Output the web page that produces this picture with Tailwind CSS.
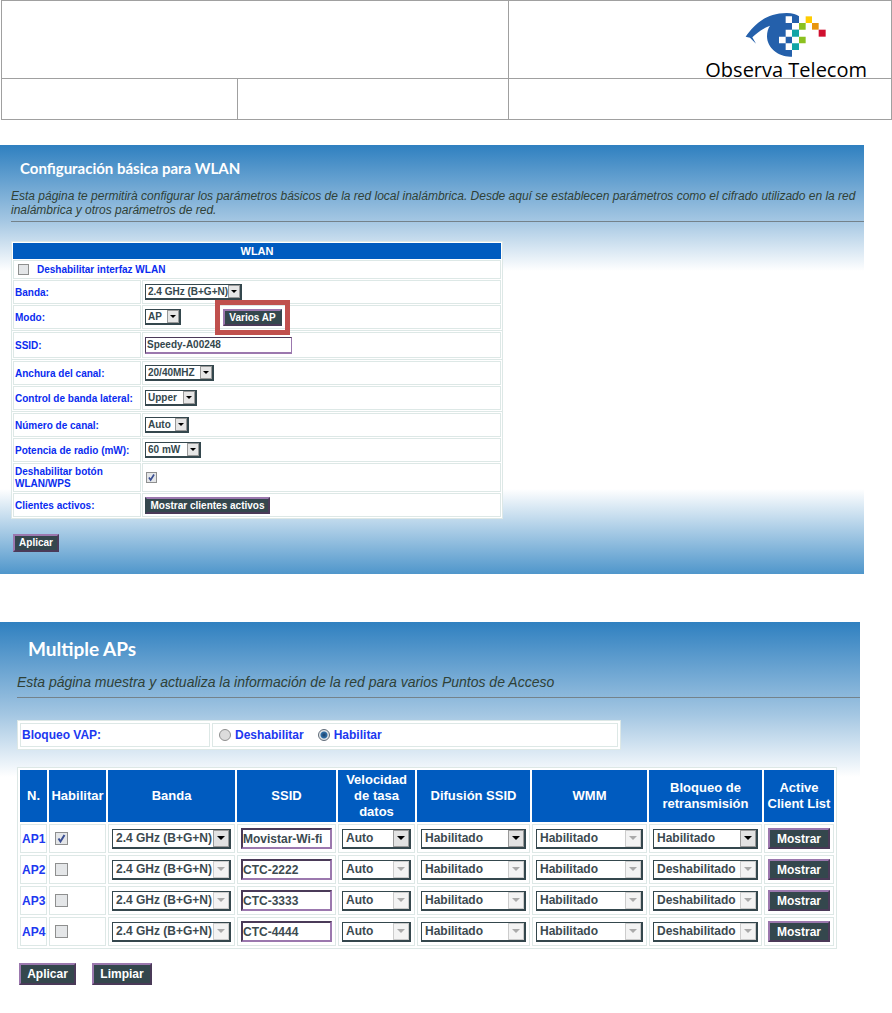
<!DOCTYPE html>
<html lang="es">
<head>
    <meta charset="UTF-8">
    <meta name="viewport" content="width=device-width, initial-scale=1.0">
    <title>Observa Telecom - Configuración WLAN</title>
    <script src="https://cdn.jsdelivr.net/npm/@tailwindcss/browser@4"></script>
</head>

<body class="bg-white font-['Liberation_Sans',Arial,sans-serif]">
    <!-- Cabecera -->
    <header class="ml-px border border-[#a0a0a0]">
        <div class="flex h-[77px]">
            <div class="w-[57%] border-r border-[#a0a0a0]"></div>
            <div class="flex flex-1 flex-col items-end pr-6 pt-[10px]">
                <svg class="mr-10 h-[47px] w-[82px] shrink-0" viewBox="165 30 246 141" role="img" aria-label="Observa Telecom">
                    <path fill="#2460ab" d="M167 107C190 76 222 37 290 36C308 36 320 40 327 46V86H306V167C268 170 231 142 231 106C231 93 234 82 240 74C218 82 201 96 187 109L198 128L180 110Z"/>
                    <path fill="#fff" d="M287 46h19v20h-19zM287 86h19v21h-19zM267 107h20v20h-20zM287 127h19v20h-19zM306 66h21v20h-21z"/>
                    <path fill="#2460ab" d="M306 46h21v20h-21z"/>
                    <path fill="#12a5a5" d="M306 86h21v21h-21zM306 127h21v20h-21z"/>
                    <path fill="#8cc11f" d="M327 66h20v20h-20zM327 107h20v20h-20z"/>
                    <path fill="#fc0" d="M347 46h19v20h-19z"/>
                    <path fill="#e8950c" d="M366 66h20v20h-20z"/>
                    <path fill="#d0102f" d="M386 86h21v21h-21z"/>
                </svg>
                <span class="shrink-0 font-['Open_Sans',sans-serif] text-xl leading-6 text-black">Observa Telecom</span>
            </div>
        </div>
        <div class="flex h-[41px] border-t border-[#a0a0a0]">
            <div class="w-[26.5%] border-r border-[#a0a0a0]"></div>
            <div class="w-[30.5%] border-r border-[#a0a0a0]"></div>
            <div class="flex-1"></div>
        </div>
    </header>

    <main>
        <!-- Configuración básica -->
        <section class="mr-7 mt-[25px] bg-[linear-gradient(to_bottom,#2f80c0_0px,#a3c6e2_75px,#fff_126px,#fff_344px,#4f96cb_429px)] pb-[22px] pl-[11px] text-[10px] font-bold text-[#0a2cf0]">
            <h1 class="pl-[9px] pt-[11px] font-['Lato',sans-serif] text-[15px] leading-6 text-white">Configuración básica para WLAN</h1>
            <p class="mt-[9px] text-xs font-normal italic leading-[14px] text-[#2f4137]">Esta página te permitirà configurar los parámetros básicos de la red local inalámbrica. Desde aquí se establecen parámetros como el cifrado utilizado en la red inalámbrica y otros parámetros de red.</p>
            <hr class="mt-1 border-[#74828a]">

            <form>
                <div class="mt-[19px] w-[492px] border border-b-0 border-[#dde8e6] bg-white">
                    <div class="flex flex-col gap-px border-b border-[#dde8e6] p-px">
                        <h2 class="h-4 bg-[#005bbf] text-center text-[11px] leading-4 text-white">WLAN</h2>
                        <div class="flex h-[19px] items-center gap-2 border border-[#dde8e6] pl-1">
                            <input id="disableWlan" type="checkbox" class="size-[11px] appearance-none border border-[#8e8f8f] bg-[#e4e6e8]">
                            <label for="disableWlan">Deshabilitar interfaz WLAN</label>
                        </div>
                        <div class="grid h-6 grid-cols-[128px_1fr] gap-px">
                            <label for="band" class="flex items-center border border-[#dde8e6] pl-px">Banda:</label>
                            <div class="flex items-center border border-[#dde8e6] pl-[2px]">
                                <div class="relative w-[97px]">
                                    <select id="band" class="block h-4 w-full appearance-none border border-b-2 border-r-2 border-[#34474d] bg-white pl-[2px] leading-3 text-[#34474d]"><option>2.4 GHz (B+G+N)</option></select>
                                    <span class="pointer-events-none absolute right-[2px] top-px flex h-[13px] w-3 items-center justify-center border border-[#999] bg-[#e6e6e6]"><svg class="h-[3px] w-[6px]" viewBox="0 0 6 3"><path d="M0 0h6L3 3z"/></svg></span>
                                </div>
                            </div>
                        </div>
                        <div class="grid h-6 grid-cols-[128px_1fr] gap-px">
                            <label for="mode" class="flex items-center border border-[#dde8e6] pl-px">Modo:</label>
                            <div class="flex items-center border border-[#dde8e6] pl-[2px]">
                                <div class="relative w-9">
                                    <select id="mode" class="block h-4 w-full appearance-none border border-b-2 border-r-2 border-[#34474d] bg-white pl-[2px] leading-3 text-[#34474d]"><option>AP</option></select>
                                    <span class="pointer-events-none absolute right-[2px] top-px flex h-[13px] w-3 items-center justify-center border border-[#999] bg-[#e6e6e6]"><svg class="h-[3px] w-[6px]" viewBox="0 0 6 3"><path d="M0 0h6L3 3z"/></svg></span>
                                </div>
                                <div class="relative ml-[42px]">
                                    <button type="button" class="block h-[17px] w-[59px] border-2 border-b-[#4a3a58] border-l-[#9b78ae] border-r-[#34474d] border-t-[#9b78ae] bg-[#34474d] leading-[14px] text-white">Varios AP</button>
                                    <span class="pointer-events-none absolute -inset-x-2 -inset-y-[9px] border-5 border-[#c0504d]"></span>
                                </div>
                            </div>
                        </div>
                    </div>
                    <div class="border-b border-[#dde8e6] p-px">
                        <div class="grid h-[26px] grid-cols-[128px_1fr] gap-px">
                            <label for="ssid" class="flex items-center border border-[#dde8e6] pl-px">SSID:</label>
                            <div class="flex items-center border border-[#dde8e6] pl-[2px]">
                                <input id="ssid" type="text" value="Speedy-A00248" class="h-[17px] w-[147px] border border-b-2 border-b-[#9b78ae] border-l-[#4a3a58] border-r-[#9b78ae] border-t-[#4a3a58] bg-white pl-px text-[#34474d]">
                            </div>
                        </div>
                    </div>
                    <div class="flex flex-col gap-px border-b border-[#dde8e6] p-px">
                        <div class="grid h-6 grid-cols-[128px_1fr] gap-px">
                            <label for="channelWidth" class="flex items-center border border-[#dde8e6] pl-px">Anchura del canal:</label>
                            <div class="flex items-center border border-[#dde8e6] pl-[2px]">
                                <div class="relative w-[69px]">
                                    <select id="channelWidth" class="block h-4 w-full appearance-none border border-b-2 border-r-2 border-[#34474d] bg-white pl-[2px] leading-3 text-[#34474d]"><option>20/40MHZ</option></select>
                                    <span class="pointer-events-none absolute right-[2px] top-px flex h-[13px] w-3 items-center justify-center border border-[#999] bg-[#e6e6e6]"><svg class="h-[3px] w-[6px]" viewBox="0 0 6 3"><path d="M0 0h6L3 3z"/></svg></span>
                                </div>
                            </div>
                        </div>
                        <div class="grid h-6 grid-cols-[128px_1fr] gap-px">
                            <label for="sideband" class="flex items-center border border-[#dde8e6] pl-px">Control de banda lateral:</label>
                            <div class="flex items-center border border-[#dde8e6] pl-[2px]">
                                <div class="relative w-[52px]">
                                    <select id="sideband" class="block h-4 w-full appearance-none border border-b-2 border-r-2 border-[#34474d] bg-white pl-[2px] leading-3 text-[#34474d]"><option>Upper</option></select>
                                    <span class="pointer-events-none absolute right-[2px] top-px flex h-[13px] w-3 items-center justify-center border border-[#999] bg-[#e6e6e6]"><svg class="h-[3px] w-[6px]" viewBox="0 0 6 3"><path d="M0 0h6L3 3z"/></svg></span>
                                </div>
                            </div>
                        </div>
                    </div>
                    <div class="flex flex-col gap-px border-b border-[#dde8e6] p-px">
                        <div class="grid h-6 grid-cols-[128px_1fr] gap-px">
                            <label for="channel" class="flex items-center border border-[#dde8e6] pl-px">Número de canal:</label>
                            <div class="flex items-center border border-[#dde8e6] pl-[2px]">
                                <div class="relative w-11">
                                    <select id="channel" class="block h-4 w-full appearance-none border border-b-2 border-r-2 border-[#34474d] bg-white pl-[2px] leading-3 text-[#34474d]"><option>Auto</option></select>
                                    <span class="pointer-events-none absolute right-[2px] top-px flex h-[13px] w-3 items-center justify-center border border-[#999] bg-[#e6e6e6]"><svg class="h-[3px] w-[6px]" viewBox="0 0 6 3"><path d="M0 0h6L3 3z"/></svg></span>
                                </div>
                            </div>
                        </div>
                        <div class="grid h-6 grid-cols-[128px_1fr] gap-px">
                            <label for="power" class="flex items-center border border-[#dde8e6] pl-px">Potencia de radio (mW):</label>
                            <div class="flex items-center border border-[#dde8e6] pl-[2px]">
                                <div class="relative w-14">
                                    <select id="power" class="block h-4 w-full appearance-none border border-b-2 border-r-2 border-[#34474d] bg-white pl-[2px] leading-3 text-[#34474d]"><option>60 mW</option></select>
                                    <span class="pointer-events-none absolute right-[2px] top-px flex h-[13px] w-3 items-center justify-center border border-[#999] bg-[#e6e6e6]"><svg class="h-[3px] w-[6px]" viewBox="0 0 6 3"><path d="M0 0h6L3 3z"/></svg></span>
                                </div>
                            </div>
                        </div>
                        <div class="grid h-[29px] grid-cols-[128px_1fr] gap-px">
                            <label for="wpsButton" class="flex items-center border border-[#dde8e6] pl-px leading-3">Deshabilitar botón<br>WLAN/WPS</label>
                            <div class="flex items-center border border-[#dde8e6] pl-[3px]">
                                <span class="relative">
                                    <input id="wpsButton" type="checkbox" checked class="block size-[11px] appearance-none border border-[#8e8f8f] bg-[#e4e6e8]">
                                    <svg class="pointer-events-none absolute inset-0 size-[11px]" viewBox="0 0 13 13" fill="none" stroke="#3b4f92" stroke-width="2"><path d="M3.500 6.500l2 3L9.500 3"/></svg>
                                </span>
                            </div>
                        </div>
                        <div class="grid h-6 grid-cols-[128px_1fr] gap-px">
                            <span class="flex items-center border border-[#dde8e6] pl-px">Clientes activos:</span>
                            <div class="flex items-center border border-[#dde8e6] pl-[2px]">
                                <button type="button" class="h-[17px] w-[125px] border-2 border-b-[#4a3a58] border-l-[#34474d] border-r-[#4a3a58] border-t-[#9b78ae] bg-[#34474d] leading-[14px] text-white">Mostrar clientes activos</button>
                            </div>
                        </div>
                    </div>
                </div>
                <button type="submit" class="ml-[2px] mt-[15px] block h-[18px] w-[46px] border-2 border-b-[#4a3a58] border-l-[#9b78ae] border-r-[#4a3a58] border-t-[#9b78ae] bg-[#34474d] leading-[14px] text-white">Aplicar</button>
            </form>
        </section>

        <!-- Varios puntos de acceso -->
        <section class="mr-8 mt-12 bg-[linear-gradient(to_bottom,#2f80c0_0px,#a3c6e2_92px,#fff_155px)] pl-[17px] text-xs font-bold text-[#2038f0]">
            <h1 class="pl-[11px] pt-[15px] font-['Lato',sans-serif] text-[19px] leading-6 text-white">Multiple APs</h1>
            <p class="mt-3 text-sm font-normal italic leading-[18px] text-[#2f4137]">Esta página muestra y actualiza la información de la red para varios Puntos de Acceso</p>
            <hr class="mt-[6px] border-[#74828a]">

            <form>
                <div class="mt-[22px] grid w-[604px] grid-cols-[190px_1fr] gap-[2px] border border-[#dde8e6] bg-white p-[2px]">
                    <span class="flex h-6 items-center border border-[#dde8e6] pl-px">Bloqueo VAP:</span>
                    <div class="flex items-center border border-[#dde8e6] pl-1.5">
                        <input id="vapOff" name="vap" type="radio" class="size-3 appearance-none rounded-full border border-[#8e8f8f] bg-[#dcdcdc]">
                        <label for="vapOff" class="ml-1">Deshabilitar</label>
                        <input id="vapOn" name="vap" type="radio" checked class="ml-3.5 size-3 appearance-none rounded-full border border-[#5f6b78] bg-[radial-gradient(circle,#1d3f66_0px,#2f6fa8_3px,#e4e6e8_4px)]">
                        <label for="vapOn" class="ml-1">Habilitar</label>
                    </div>
                </div>

                <table class="mt-[17px] w-[820px] table-fixed border-separate border-spacing-[2px] border border-[#dde8e6] bg-white">
                    <colgroup>
                        <col class="w-[27px]"><col class="w-[57px]"><col class="w-[127px]"><col class="w-[99px]"><col class="w-[77px]"><col class="w-[113px]"><col class="w-[115px]"><col class="w-[113px]"><col class="w-[70px]">
                    </colgroup>
                    <thead>
                        <tr class="h-[52px] bg-[#005bbf] text-[13px] leading-4 text-white">
                            <th class="p-0">N.</th>
                            <th class="p-0">Habilitar</th>
                            <th class="p-0">Banda</th>
                            <th class="p-0">SSID</th>
                            <th class="p-0">Velocidad de tasa datos</th>
                            <th class="p-0">Difusión SSID</th>
                            <th class="p-0">WMM</th>
                            <th class="p-0">Bloqueo de retransmisión</th>
                            <th class="p-0">Active Client List</th>
                        </tr>
                    </thead>
                    <tbody id="apRows"></tbody>
                </table>

                <div class="ml-[2px] mt-[14px] flex gap-4">
                    <button type="submit" class="h-[22px] w-[57px] border-2 border-b-[#4a3a58] border-l-[#9b78ae] border-r-[#4a3a58] border-t-[#9b78ae] bg-[#34474d] leading-4 text-white">Aplicar</button>
                    <button type="reset" class="h-[22px] w-[60px] border-2 border-b-[#4a3a58] border-l-[#9b78ae] border-r-[#4a3a58] border-t-[#9b78ae] bg-[#34474d] leading-4 text-white">Limpiar</button>
                </div>
            </form>
        </section>
    </main>

    <script>
        const aps = [
            { name: 'AP1', ssid: 'Movistar-Wi-fi', on: true, block: 'Habilitado' },
            { name: 'AP2', ssid: 'CTC-2222', on: false, block: 'Deshabilitado' },
            { name: 'AP3', ssid: 'CTC-3333', on: false, block: 'Deshabilitado' },
            { name: 'AP4', ssid: 'CTC-4444', on: false, block: 'Deshabilitado' }
        ];

        // celda con lista desplegable
        function selectCell(label, value, enabled) {
            const arrow = enabled ? 'fill-black' : 'fill-[#aaa]';
            const box = enabled ? 'border-[#999] bg-[#e2e2e2]' : 'border-[#ccc] bg-[#f3f3f3]';
            return `<td class="border border-[#dde8e6] px-[3px] py-0">
                <div class="relative">
                    <select aria-label="${label}" ${enabled ? '' : 'disabled'} class="block h-5 w-full appearance-none border border-b-2 border-r-2 border-[#34474d] bg-white pl-[3px] leading-4 text-[#3c4a50] opacity-100"><option>${value}</option></select>
                    <span class="pointer-events-none absolute right-[2px] top-px flex h-[17px] w-4 items-center justify-center border ${box}"><svg class="h-1 w-2 ${arrow}" viewBox="0 0 8 4"><path d="M0 0h8L4 4z"/></svg></span>
                </div>
            </td>`;
        }

        document.getElementById('apRows').innerHTML = aps.map(ap => `
            <tr class="h-[29px]">
                <td class="border border-[#dde8e6] py-0 pl-px pr-0">${ap.name}</td>
                <td class="border border-[#dde8e6] py-0 pl-[5px] pr-0">
                    <span class="relative block size-[13px]">
                        <input type="checkbox" aria-label="Habilitar ${ap.name}" ${ap.on ? 'checked' : ''} class="block size-[13px] appearance-none border border-[#8e8f8f] bg-[#e4e6e8]">
                        ${ap.on ? '<svg class="pointer-events-none absolute inset-0 size-[13px]" viewBox="0 0 13 13" fill="none" stroke="#3b4f92" stroke-width="2"><path d="M3.500 6.500l2 3L9.500 3"/></svg>' : ''}
                    </span>
                </td>
                ${selectCell('Banda ' + ap.name, '2.4 GHz (B+G+N)', ap.on)}
                <td class="border border-[#dde8e6] px-[3px] py-0">
                    <input type="text" aria-label="SSID ${ap.name}" value="${ap.ssid}" class="block h-[21px] w-full border-2 border-b-[#9b78ae] border-l-[#4a3a58] border-r-[#9b78ae] border-t-[#4a3a58] bg-white text-[#3c4a50]">
                </td>
                ${selectCell('Velocidad ' + ap.name, 'Auto', ap.on)}
                ${selectCell('Difusión SSID ' + ap.name, 'Habilitado', ap.on)}
                ${selectCell('WMM ' + ap.name, 'Habilitado', false)}
                ${selectCell('Bloqueo ' + ap.name, ap.block, ap.on)}
                <td class="border border-[#dde8e6] px-[3px] py-0">
                    <button type="button" class="block h-[21px] w-full border-2 border-b-[#4a3a58] border-l-[#9b78ae] border-r-[#4a3a58] border-t-[#9b78ae] bg-[#34474d] leading-4 text-white">Mostrar</button>
                </td>
            </tr>`).join('');
    </script>
</body>
</html>
